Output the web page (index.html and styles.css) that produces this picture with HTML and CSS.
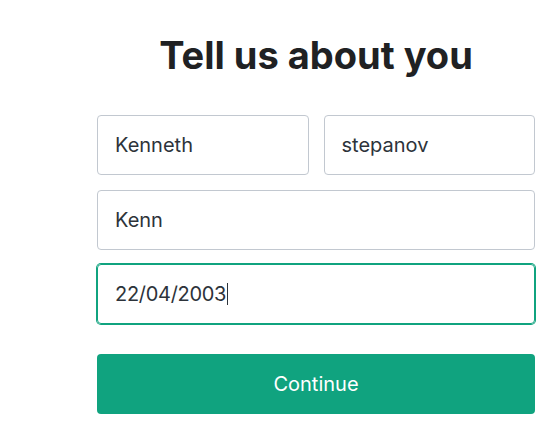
FILE: index.html
```html
<!DOCTYPE html>
<html lang="en">
<head>
<meta charset="utf-8">
<title>Tell us about you</title>
<link rel="stylesheet" href="styles.css">
</head>
<body>
<main class="page">
  <form class="form">
    <h1 class="title">Tell us about you</h1>
    <div class="row">
      <div class="field" role="textbox" aria-label="First name">Kenneth</div>
      <div class="field" role="textbox" aria-label="Last name">stepanov</div>
    </div>
    <div class="field" role="textbox" aria-label="Username">Kenn</div>
    <div class="field field-focus" role="textbox" aria-label="Birthday">22/04/2003<span class="caret"></span></div>
    <button type="button" class="btn">Continue</button>
  </form>
</main>
</body>
</html>
```

FILE: styles.css
```css
html, body {
  margin: 0;
  padding: 0;
  background: #ffffff;
}

body {
  font-family: "Inter", "Liberation Sans", sans-serif;
  color: #2d333a;
}

.page {
  padding: 32px 0 0 97px;
}

.form {
  width: 438px;
  display: flex;
  flex-direction: column;
}

.title {
  margin: 0 0 37px 0;
  font-size: 38px;
  line-height: 46px;
  font-weight: 700;
  color: #202123;
  text-align: center;
}

.row {
  display: flex;
  gap: 15px;
  margin-bottom: 15px;
}

.row .field {
  flex: 1 1 0;
  margin-bottom: 0;
}

.field {
  box-sizing: border-box;
  height: 60px;
  border: 1px solid #c2c8d0;
  border-radius: 4px;
  padding: 0 17px;
  display: flex;
  align-items: center;
  font-size: 20px;
  color: #2d333a;
  margin-bottom: 14px;
}

.field-focus {
  border-color: #10a37f;
  box-shadow: 0 0 0 1px #10a37f;
  margin-bottom: 30px;
  letter-spacing: -0.3px;
}

.caret {
  display: inline-block;
  width: 1px;
  height: 22px;
  background: #2d333a;
  margin-left: 1px;
}

.btn {
  box-sizing: border-box;
  height: 60px;
  width: 100%;
  border: none;
  border-radius: 4px;
  background: #10a37f;
  color: #ffffff;
  font-family: "Inter", "Liberation Sans", sans-serif;
  font-size: 20px;
  font-weight: 400;
  cursor: pointer;
}
```
